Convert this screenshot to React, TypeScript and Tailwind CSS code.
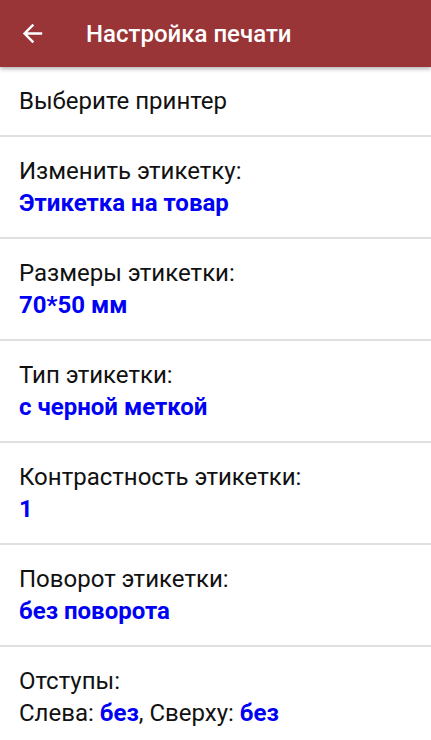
import React from "react";

const rows: { label: string; value: string }[] = [
  { label: "Изменить этикетку:", value: "Этикетка на товар" },
  { label: "Размеры этикетки:", value: "70*50 мм" },
  { label: "Тип этикетки:", value: "с черной меткой" },
  { label: "Контрастность этикетки:", value: "1" },
  { label: "Поворот этикетки:", value: "без поворота" },
];

export default function App() {
  return (
    <div className="w-[431px] h-[740px] overflow-hidden bg-white font-['Roboto',sans-serif] text-[24px] leading-[32px] text-[#111]">
      <div className="relative z-10 h-[67px] bg-[#993537] flex items-center shadow-[0_2px_4px_rgba(0,0,0,0.3)]">
        <div className="w-[86px] pl-[18px] flex items-center">
          <svg width="29" height="29" viewBox="0 0 24 24" fill="#fff">
            <path d="M20 11H7.83l5.59-5.59L12 4l-8 8 8 8 1.41-1.41L7.83 13H20v-2z" />
          </svg>
        </div>
        <div className="text-white text-[24px] font-medium">Настройка печати</div>
      </div>
      <div className="px-[19px] py-[18px]">Выберите принтер</div>
      {rows.map((r) => (
        <div key={r.label} className="border-t-2 border-[#e0e0e0] px-[19px] py-[18px]">
          <div>{r.label}</div>
          <div className="font-bold text-[#0000f5]">{r.value}</div>
        </div>
      ))}
      <div className="border-t-2 border-[#e0e0e0] px-[19px] py-[18px]">
        <div>Отступы:</div>
        <div>
          Слева: <span className="font-bold text-[#0000f5]">без</span>, Сверху:{" "}
          <span className="font-bold text-[#0000f5]">без</span>
        </div>
      </div>
    </div>
  );
}
